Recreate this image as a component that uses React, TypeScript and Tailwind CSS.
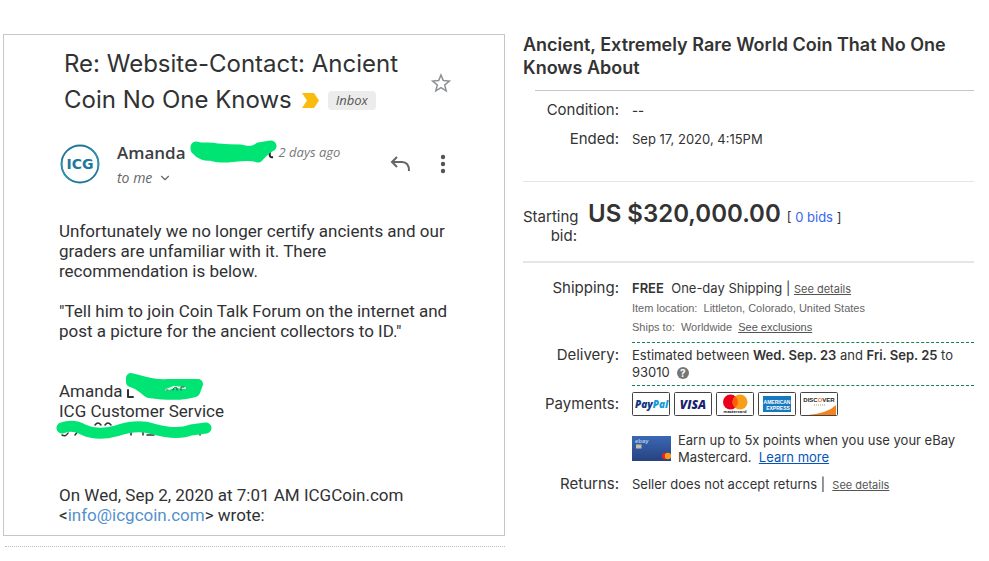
import React from 'react';
import { ChevronDown } from 'lucide-react';

interface RowProps {
    label: string;
    labelClass?: string;
    children: React.ReactNode;
}

const Row: React.FC<RowProps> = ({ label, labelClass = '', children }) => (
    <div className="flex gap-[13px]">
        <dt className={`w-24 shrink-0 text-right text-[15px] leading-5 ${labelClass}`}>{label}</dt>
        <dd className="min-w-0 flex-1 text-[13px] leading-[17px]">{children}</dd>
    </div>
);

const PayBox: React.FC<{ name: string; children: React.ReactNode }> = ({ name, children }) => (
    <li>
        <svg width="38" height="24" viewBox="0 0 38 24" role="img" aria-label={name}>
            <rect x="0.5" y="0.5" width="37" height="23" rx="1" fill="#fff" stroke="#444" />
            {children}
        </svg>
    </li>
);

const Email: React.FC = () => (
    <article className="border border-[#c6c6c6] pl-[55px] pr-10 pt-[11px] pb-[10px] text-[#303133] font-[Roboto,sans-serif]">
        {/* Subject */}
        <header className="flex items-start justify-between pl-[5px] pr-[13px]">
            <h2 className="font-[Inter,sans-serif] text-[24px] leading-9 text-[#303234] whitespace-nowrap">
                Re: Website-Contact: Ancient
                <br />
                <span className="flex items-center">
                    Coin No One Knows
                    <svg className="ml-2.5" width="18" height="15" viewBox="0 0 18 15" fill="#fbbc10">
                        <path d="M0 0h12l5 7.500-5 7.500H0l5-7.500z" />
                    </svg>
                    <span className="ml-2 rounded bg-[#ececec] px-2 font-['Open_Sans',sans-serif] text-[13px] italic leading-[19px] text-[#555]">Inbox</span>
                </span>
            </h2>
            <button aria-label="Star" className="mt-[27px]">
                <svg width="20" height="20" viewBox="0 0 20 20" fill="none" stroke="#8b9093" strokeWidth="1.500">
                    <path d="M10 2l2.300 5.600 6 .5-4.600 3.900 1.500 5.900L10 14.700l-5.200 3.200L6.300 12 1.700 8.100l6-.5z" />
                </svg>
            </button>
        </header>

        {/* Sender */}
        <div className="mt-[22px] flex h-[52px] items-start pr-[18px]">
            <svg className="mt-[3px]" width="42" height="42" viewBox="0 0 42 42" role="img" aria-label="ICG">
                <circle cx="21" cy="21" r="18.500" fill="none" stroke="#21779b" strokeWidth="1.800" />
                <path d="M3 17a18.300 18.300 0 0 0 9 20M39 25A18.300 18.300 0 0 0 30 5" fill="none" stroke="#2f8fae" strokeWidth="1.500" />
                <text x="21" y="25.500" textAnchor="middle" fontFamily="DejaVu Sans" fontWeight="bold" fontSize="14" fill="#20789b">ICG</text>
            </svg>
            <div className="relative ml-4 flex-1 font-['Open_Sans',sans-serif]">
                <p className="flex gap-[93px] leading-[25px]">
                    <span className="text-[17px] font-semibold text-[#3c4043]">Amanda</span>
                    <time className="text-[13px] italic text-[#777]">2 days ago</time>
                </p>
                <p className="flex items-center gap-1.5 text-[14px] italic leading-[25px] text-[#666]">
                    to me <ChevronDown size={14} />
                </p>
                <svg className="absolute left-[72px] top-0" width="90" height="24" viewBox="0 0 90 24" fill="none">
                    <path d="M81 12c-1 4 0 6 3 5" stroke="#222" strokeWidth="2" />
                    <path d="M7 7c8 2 13 0 22 2 10 1 14 1 23 1 9 2 12 2 18-2l12-2c-5 2-9 7-13 11-8-3-20-1-30 0-8 0-14 0-17-2-5 1-11-1-15-6" fill="#00e474" stroke="#00e474" strokeWidth="11" strokeLinecap="round" strokeLinejoin="round" />
                </svg>
            </div>
            <button aria-label="Reply" className="mt-[15px]">
                <svg width="20" height="18" viewBox="0 0 20 18" fill="none" stroke="#666" strokeWidth="2">
                    <path d="M7 2L2 7l5 5M2 7h10c5 0 7 3 7 9" />
                </svg>
            </button>
            <button aria-label="More" className="ml-[30px] mt-[14px]">
                <svg width="6" height="20" viewBox="0 0 6 20" fill="#555">
                    <circle cx="3" cy="3" r="2.200" /><circle cx="3" cy="10" r="2.200" /><circle cx="3" cy="17" r="2.200" />
                </svg>
            </button>
        </div>

        {/* Message */}
        <div className="mt-[29px] whitespace-nowrap text-[17px] leading-5">
            <p>
                Unfortunately we no longer certify ancients and our<br />
                graders are unfamiliar with it. There<br />
                recommendation is below.
            </p>
            <p className="mt-5">
                "Tell him to join Coin Talk Forum on the internet and<br />
                post a picture for the ancient collectors to ID."
            </p>
            <div className="relative mt-10 pb-5">
                <p>Amanda</p>
                <p>ICG Customer Service</p>
                <svg className="absolute -left-1 -top-3" width="160" height="72" viewBox="0 0 160 72" fill="none" strokeLinecap="round" strokeLinejoin="round">
                    <path d="M73 21v7h5" stroke="#303133" strokeWidth="2" />
                    <path d="M7 66q4 2 6-2M20 66l4-5M40 56q3-4 6 0M50 56q3-4 6 0M61 66v-4M76 66v-5M84 61h4v5M92 66h7M108 66v-1M124 66h8M145 66v-5" stroke="#303133" strokeWidth="1.500" />
                    <path d="M76 9c12 3 24 8 37 6l30 0-3 8c-12 4-31 3-46 1-6-3-8-9-18-11z" fill="#00e474" stroke="#00e474" strokeWidth="10" />
                    <path d="M111 21l8-3 11 1" stroke="#e6fff2" strokeWidth="2" />
                    <path d="M111 21h2M118 21q1-4 4-2v2M126 21v-3h3" stroke="#344" strokeWidth="1" />
                    <path d="M7 59c8-3 15-2 22 2 11 5 21 4 32 1 12-4 25-6 37-2 15 4 28 5 38 1l15-2" stroke="#00e474" strokeWidth="11" />
                </svg>
            </div>
            <p className="mt-11">
                On Wed, Sep 2, 2020 at 7:01 AM ICGCoin.com<br />
                &lt;<a href="mailto:info@icgcoin.com" className="text-[#5590cb]">info@icgcoin.com</a>&gt; wrote:
            </p>
        </div>
    </article>
);

const App: React.FC = () => {
    return (
        <main className="grid grid-cols-[minmax(0,502fr)_minmax(0,451fr)] gap-[18px] bg-white pl-[3px] pr-[15px] text-[#333]">
            <section className="pt-[34px]">
                <Email />
                <div className="ml-0.5 mt-[10px] border-t border-dotted border-[#bbb]" />
            </section>

            <section className="pt-[33px] font-[Inter,sans-serif]">
                <h1 className="text-[18px] font-semibold leading-[23px]">Ancient, Extremely Rare World Coin That No One Knows About</h1>
                <hr className="ml-3 mt-[11px] border-[#c6c6c6]" />

                <dl className="mt-[9px] flex flex-col gap-[9px]">
                    <Row label="Condition:"><span className="font-medium leading-5">--</span></Row>
                    <Row label="Ended:"><span className="leading-5">Sep 17, 2020, 4:15PM</span></Row>
                </dl>
                <hr className="mt-8 border-[#e5e5e5]" />

                {/* Price */}
                <div className="mt-[17px] flex items-baseline">
                    <p className="w-[54px] text-right text-[15px] leading-[19px]">Starting bid:</p>
                    <p className="ml-[11px] text-[24px] font-semibold leading-[30px]">US $320,000.00</p>
                    <p className="ml-1.5 text-[13px]">[ <a href="#bids" className="text-[#3665f3]">0 bids</a> ]</p>
                </div>
                <hr className="mt-4 border-t-2 border-[#e5e5e5]" />

                <dl className="mt-[15px]">
                    <Row label="Shipping:">
                        <p className="leading-5">
                            <b className="font-semibold">FREE</b>&nbsp; One-day Shipping | <a href="#shipping" className="text-[11px] text-[#555] underline">See details</a>
                        </p>
                        <div className="font-['Liberation_Sans',sans-serif] text-[11px] leading-[19px] text-[#666]">
                            <p>Item location:&nbsp; Littleton, Colorado, United States</p>
                            <p>Ships to:&nbsp; Worldwide &nbsp;<a href="#exclusions" className="text-[#555] underline">See exclusions</a></p>
                        </div>
                        <div className="mt-[5px] border-t border-dashed border-[#16804f]" />
                    </Row>
                    <Row label="Delivery:" labelClass="pt-0.5">
                        <p className="mt-1">
                            Estimated between <b className="font-semibold">Wed. Sep. 23</b> and <b className="font-semibold">Fri. Sep. 25</b> to
                            <span className="flex items-center gap-[7px]">
                                93010
                                <button aria-label="Help" className="size-3 rounded-full bg-[#767676] text-[10px] font-bold leading-3 text-white">?</button>
                            </span>
                        </p>
                        <div className="mt-1 border-t border-dashed border-[#16804f]" />
                    </Row>
                    <Row label="Payments:" labelClass="pt-2">
                        <ul className="mt-1.5 flex gap-1">
                            <PayBox name="PayPal">
                                <text x="3" y="16" fontFamily="Open Sans" fontWeight="800" fontStyle="italic" fontSize="10" fill="#123984">Pay<tspan fill="#159bd7">Pal</tspan></text>
                            </PayBox>
                            <PayBox name="Visa">
                                <text x="19" y="16.500" textAnchor="middle" fontFamily="Open Sans" fontWeight="800" fontStyle="italic" fontSize="12" fill="#1a1f71">VISA</text>
                            </PayBox>
                            <PayBox name="Mastercard">
                                <circle cx="14.500" cy="10" r="7.500" fill="#eb001b" />
                                <circle cx="24" cy="10" r="7.500" fill="#f79e1b" />
                                <path d="M19.200 4.200a7.500 7.500 0 0 1 0 11.600 7.500 7.500 0 0 1 0-11.600" fill="#ff5f00" />
                                <text x="19" y="21" textAnchor="middle" fontFamily="Open Sans" fontWeight="bold" fontSize="4" fill="#222">mastercard</text>
                            </PayBox>
                            <PayBox name="American Express">
                                <rect x="5" y="4" width="28" height="16" fill="#1979be" />
                                <text x="19" y="11.500" textAnchor="middle" fontFamily="Liberation Sans" fontWeight="bold" fontSize="5" fill="#fff">AMERICAN</text>
                                <text x="20" y="17.500" textAnchor="middle" fontFamily="Liberation Sans" fontWeight="bold" fontSize="5" fill="#fff">EXPRESS</text>
                            </PayBox>
                            <PayBox name="Discover">
                                <path d="M8 23q20-2 28-10v10z" fill="#f58220" />
                                <text x="19" y="10" textAnchor="middle" fontFamily="Liberation Sans" fontWeight="bold" fontSize="6" fill="#222">DISC<tspan fill="#f58220">O</tspan>VER</text>
                                <path d="M14 13h11" stroke="#999" strokeDasharray="1 1" />
                            </PayBox>
                        </ul>
                        <div className="mt-4 flex gap-[7px]">
                            <svg className="mt-1 shrink-0" width="39" height="25" viewBox="0 0 39 25" role="img" aria-label="eBay Mastercard">
                                <linearGradient id="card" x2="0" y2="1">
                                    <stop stopColor="#3a68b4" /><stop offset="1" stopColor="#264280" />
                                </linearGradient>
                                <rect width="39" height="25" fill="url(#card)" />
                                <text x="3" y="7" fontFamily="Liberation Sans" fontSize="6" fontWeight="bold" fill="#a9c9ec">ebay</text>
                                <rect x="4" y="8.500" width="5.500" height="4" fill="#c6bda5" />
                                <circle cx="33" cy="20" r="3.200" fill="#e92222" /><circle cx="36" cy="20" r="3.200" fill="#f79e1b" />
                            </svg>
                            <p>
                                Earn up to 5x points when you use your eBay
                                <span className="block">Mastercard.&nbsp; <a href="#learn" className="text-[#0654ba] underline">Learn more</a></span>
                            </p>
                        </div>
                    </Row>
                    <div className="h-2" />
                    <Row label="Returns:">
                        <p className="leading-5">Seller does not accept returns | &nbsp;<a href="#returns" className="text-[11px] text-[#555] underline">See details</a></p>
                    </Row>
                </dl>
            </section>
        </main>
    );
};

export default App;
